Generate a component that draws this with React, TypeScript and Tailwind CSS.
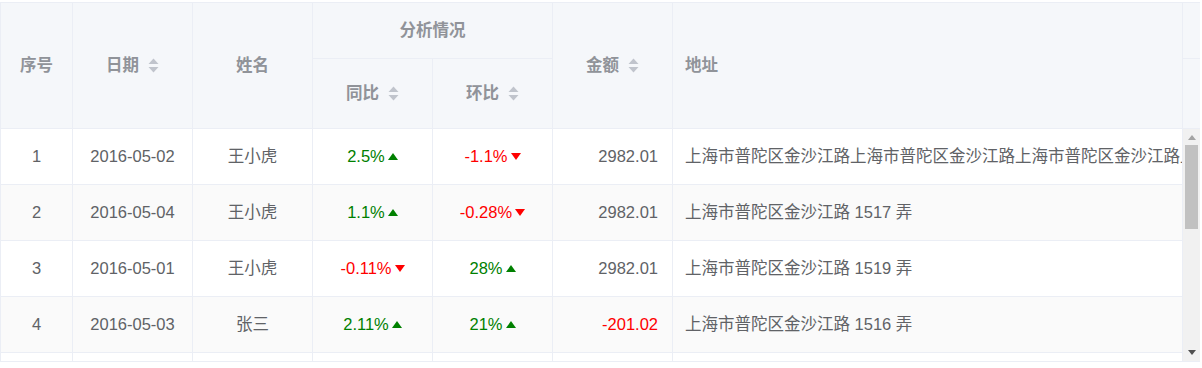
import React from "react"

type Trend = { value: string; up: boolean }

type Row = {
  id: number
  date: string
  name: string
  yoy: Trend
  mom: Trend
  amount: string
  address: string
}

const rows: Row[] = [
  {
    id: 1,
    date: "2016-05-02",
    name: "王小虎",
    yoy: { value: "2.5%", up: true },
    mom: { value: "-1.1%", up: false },
    amount: "2982.01",
    address: "上海市普陀区金沙江路上海市普陀区金沙江路上海市普陀区金沙江路上海市普陀区金沙江路",
  },
  {
    id: 2,
    date: "2016-05-04",
    name: "王小虎",
    yoy: { value: "1.1%", up: true },
    mom: { value: "-0.28%", up: false },
    amount: "2982.01",
    address: "上海市普陀区金沙江路 1517 弄",
  },
  {
    id: 3,
    date: "2016-05-01",
    name: "王小虎",
    yoy: { value: "-0.11%", up: false },
    mom: { value: "28%", up: true },
    amount: "2982.01",
    address: "上海市普陀区金沙江路 1519 弄",
  },
  {
    id: 4,
    date: "2016-05-03",
    name: "张三",
    yoy: { value: "2.11%", up: true },
    mom: { value: "21%", up: true },
    amount: "-201.02",
    address: "上海市普陀区金沙江路 1516 弄",
  },
]

const cols = "grid grid-cols-[72px_120px_120px_120px_120px_120px_510px]"
const cell = "flex items-center border-r border-b border-[#ebeef5]"

function SortCaret() {
  return (
    <svg width="11" height="15" viewBox="0 0 11 15" className="ml-[9px] shrink-0">
      <path d="M5.5 0.5 L10.5 6 L0.5 6 Z" fill="#c0c4cc" />
      <path d="M5.5 14.5 L10.5 9 L0.5 9 Z" fill="#c0c4cc" />
    </svg>
  )
}

function TrendCell({ t }: { t: Trend }) {
  return (
    <span className={`flex items-center ${t.up ? "text-[#008000]" : "text-[#ff0000]"}`}>
      {t.value}
      <svg width="10" height="7" viewBox="0 0 10 7" className="ml-[3px]">
        {t.up ? (
          <path d="M5 0 L10 7 L0 7 Z" fill="#008000" />
        ) : (
          <path d="M0 0 L10 0 L5 7 Z" fill="#ff0000" />
        )}
      </svg>
    </span>
  )
}

function Head({ children, sort, className = "" }: { children: React.ReactNode; sort?: boolean; className?: string }) {
  return (
    <div className={`${cell} bg-[#f5f7fa] text-[#909399] font-bold ${className}`}>
      {children}
      {sort && <SortCaret />}
    </div>
  )
}

export default function App() {
  return (
    <div
      className="w-[1202px] h-[368px] bg-white pt-[2px]"
      style={{ fontFamily: '"Liberation Sans", "Noto Sans CJK SC", sans-serif' }}
    >
      <div className="w-[1200px] text-[16.5px]">
        {/* header */}
        <div className="flex border-t border-[#ebeef5]">
          <div className={`${cols} grid-rows-[56px_70px] border-l border-[#ebeef5]`}>
            <Head className="row-span-2 justify-center">序号</Head>
            <Head className="row-span-2 justify-center" sort>日期</Head>
            <Head className="row-span-2 justify-center">姓名</Head>
            <Head className="col-span-2 justify-center">分析情况</Head>
            <Head className="row-span-2 justify-center" sort>金额</Head>
            <Head className="row-span-2 pl-[12px]">地址</Head>
            <Head className="justify-center" sort>同比</Head>
            <Head className="justify-center" sort>环比</Head>
          </div>
          <div className="w-[17px] flex flex-col bg-[#f5f7fa] border-b border-[#ebeef5]">
            <div className="h-[56px] border-b border-[#ebeef5]" />
          </div>
        </div>

        {/* body */}
        <div className="flex border-b border-[#ebeef5]">
          <div className="h-[232px] overflow-hidden border-l border-[#ebeef5] text-[#606266]">
            {rows.map((r) => (
              <div key={r.id} className={`${cols} h-[56px] ${r.id % 2 === 0 ? "bg-[#fafafa]" : "bg-white"}`}>
                <div className={`${cell} justify-center`}>{r.id}</div>
                <div className={`${cell} justify-center`}>{r.date}</div>
                <div className={`${cell} justify-center`}>{r.name}</div>
                <div className={`${cell} justify-center`}>
                  <TrendCell t={r.yoy} />
                </div>
                <div className={`${cell} justify-center`}>
                  <TrendCell t={r.mom} />
                </div>
                <div className={`${cell} justify-end pr-[14px] ${r.amount.startsWith("-") ? "text-[#ff0000]" : ""}`}>
                  {r.amount}
                </div>
                <div className={`${cell} pl-[12px] overflow-hidden whitespace-nowrap`}>{r.address}</div>
              </div>
            ))}
            {/* next row, only its top edge is in view */}
            <div className={`${cols} h-[56px] bg-white`}>
              <div className={cell} />
              <div className={cell} />
              <div className={cell} />
              <div className={cell} />
              <div className={cell} />
              <div className={cell} />
              <div className={cell} />
            </div>
          </div>

          {/* scrollbar */}
          <div className="w-[17px] h-[232px] bg-[#f1f1f1] flex flex-col items-center">
            <div className="h-[16px] flex items-center justify-center">
              <svg width="8" height="5" viewBox="0 0 8 5">
                <path d="M4 0 L8 5 L0 5 Z" fill="#a3a3a3" />
              </svg>
            </div>
            <div className="w-[13px] h-[84px] bg-[#c1c1c1]" />
            <div className="flex-1" />
            <div className="h-[17px] flex items-center justify-center">
              <svg width="8" height="5" viewBox="0 0 8 5">
                <path d="M0 0 L8 0 L4 5 Z" fill="#505050" />
              </svg>
            </div>
          </div>
        </div>
      </div>
    </div>
  )
}
